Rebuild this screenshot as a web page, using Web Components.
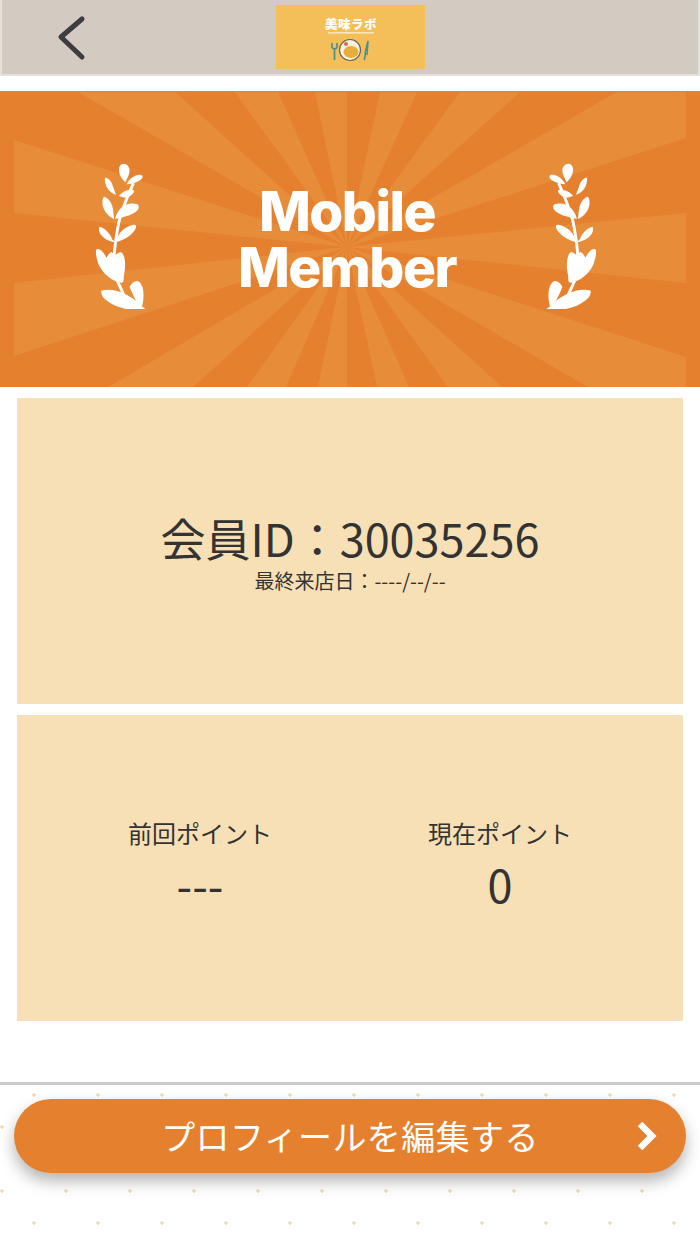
<!DOCTYPE html>
<html lang="ja"><head><meta charset="utf-8">
<style>
html,body{margin:0;padding:0;background:#fff;}
body{width:700px;height:1244px;overflow:hidden;font-family:"Noto Sans CJK JP","Noto Sans",sans-serif;color:#333;}
</style></head><body>
<app-header></app-header>
<member-banner title-a="Mobile" title-b="Member"></member-banner>
<info-card class="c1">
  <member-id id-text="会員ID：30035256" sub="最終来店日：----/--/--"></member-id>
</info-card>
<info-card class="c2">
  <point-pair>
    <point-cell label="前回ポイント" value="---"></point-cell>
    <point-cell label="現在ポイント" value="0"></point-cell>
  </point-pair>
</info-card>
<bottom-bar label="プロフィールを編集する"></bottom-bar>
<script>
const def=(name,html,init)=>customElements.define(name,class extends HTMLElement{
  connectedCallback(){ if(this.shadowRoot)return; const s=this.attachShadow({mode:'open'}); s.innerHTML=typeof html==='function'?html(this):html; }
});
def('app-header',`<style>
:host{display:flex;box-sizing:border-box;height:76px;background:#d3cbc2;border:2px solid #e4e0db;border-top:0;justify-content:center;align-items:flex-start;padding-top:5px;position:relative}
.back{position:absolute;left:52px;top:13px}
.logo{width:149px;height:64px;display:block}
</style>
<svg class="back" width="36" height="48" viewBox="0 0 36 48"><path d="M28 6 L7 24 L28 44" transform="translate(0,0)" fill="none" stroke="#3d3d3f" stroke-width="5" stroke-linecap="round" stroke-linejoin="round"/></svg>
<svg class="logo" viewBox="0 0 149 64">
<rect width="149" height="64" fill="#f4bf58"/>
<text x="75" y="24" text-anchor="middle" font-family="Noto Sans CJK JP" font-weight="900" font-size="12.5" fill="#fff" letter-spacing=".5">美味ラボ</text>
<rect x="52" y="27" width="46" height="1.6" fill="#fff" opacity=".6"/>
<circle cx="74" cy="45" r="10.5" fill="#fbf3e0" stroke="#6a6258" stroke-width="1.2"/>
<ellipse cx="75" cy="47" rx="7.5" ry="6" fill="#e9ae3a"/>
<circle cx="70" cy="39" r="2" fill="#dd6a3a"/>
<path d="M56 38v4a2.6 2.6 0 0 0 5 0v-4M58.500 44v11" fill="none" stroke="#4d8f8e" stroke-width="1.700"/>
<path d="M92 36l-3 12 2 1zM89.500 49l-1.200 6" fill="#fff" stroke="#4d8f8e" stroke-width="1.600"/>
</svg>`);
const rays=[[[14,140],[14,213]],[[14,283],[14,356]],[[78,92],[175,92]],[[235,92],[278,92]],[[315,92],[347,92]],
[[380,92],[417,92]],[[460,92],[520,92]],[[617,92],[686,92],[686,138]],[[686,213],[686,283]],[[686,357],[686,387],[588,387]],
[[377,387],[409,387]],[[448,387],[502,387]],[[108,387],[193,387]],[[247,387],[286,387]],[[318,387],[347,387]]];
const sprig=`<path d="M38 143 C33 130 26 122 27 105 C27 92 29 82 31 70 C33 58 38 45 47 25" fill="none" stroke="#fff" stroke-width="3"/>
<path d="M36.600 5C40 5 43 8 43 12C43 17 40 20 39 24C35 21 32 16 32 11C32 8 34 5 36.600 5Z" fill="#fff"/>
<path d="M40 26C43 20 50 15 55 16.500C58 18 56 21 52 23C48 25 44 26 40 26Z" fill="#fff"/>
<path d="M19 19C23 20 26 24 27 29L30 37C24 35 20 30 19 25C18.500 22 18 20 19 19Z" fill="#fff" transform="translate(-1,0)"/>
<path d="M32 38C36 33 43 31 47 32C49 34 45 38 41 39.500C38 40.500 35 39.500 32 38Z" fill="#fff"/>
<path d="M17 39C22 41 25 46 26 53L27 62C21 60 16 53 15 47C15 43 15 40 17 39Z" fill="#fff"/>
<path d="M28 62C30 53 37 46 45 46C50 46 53 47 52.500 50C52 54 46 57 40 59C36 60.500 32 61.500 28 62Z" fill="#fff"/>
<path d="M12 70C16 71 22 75 25 83L28 86C20 85 15 81 12.500 77C11 74 11 71 12 70Z" fill="#fff"/>
<path d="M29 86C30 78 37 70 47 68C51 67 50 71 48 74C44 80 37 84 29 86Z" fill="#fff"/>
<path d="M9 93C13 92 17 97 19 102C20 101 21 98 24 96C26 96 27 100 28 100C31 96 35 95 36 98C39 103 39 112 37 121C37 126 37 127 35 128C25 127 15 118 11 109C9 103 7 96 9 93Z" fill="#fff"/>
<path d="M43 132C46 127 49 126 51 126C54 127 56 130 57 135C58 142 57 148 56 152C52 153 47 142 43 132Z" fill="#fff"/>
<path d="M14 136C20 134 30 135 37 139C44 142 53 148 55 152C58 154 60 155 61 157L54 157C52 154 50 156 46 156C36 155 26 152 19 146C15 143 13 139 14 136Z" fill="#fff"/>`;
def('member-banner',h=>`<style>
:host{display:block;position:relative;margin-top:15px;height:296px;background:#e5812e;overflow:hidden}
svg.r{position:absolute;left:0;top:0}
.s{position:absolute;top:68px;width:60px;height:150px}
.l{left:87px}.rr{right:95px;transform:scaleX(-1)}
.t{position:absolute;left:0;width:694px;top:92px;text-align:center;font:800 55px/56px Inter,"Liberation Sans",sans-serif;color:#fff;letter-spacing:-1.500px}
</style>
<svg class="r" width="700" height="296" viewBox="0 91 700 296">${rays.map(r=>`<polygon fill="#e78d39" points="347,247 ${r.map(p=>p.join(',')).join(' ')}"/>`).join('')}</svg>
<svg class="s l" viewBox="0 0 60 155">${sprig}</svg>
<svg class="s rr" viewBox="0 0 60 155">${sprig}</svg>
<div class="t">${h.getAttribute('title-a')}<br>${h.getAttribute('title-b')}</div>`);
def('info-card',`<style>
:host{display:flex;box-sizing:border-box;height:306px;margin:11px 17px 0;background:#f7e0b5;align-items:center;justify-content:center}
</style><slot></slot>`);
def('member-id',h=>`<style>
:host{display:block;text-align:center;color:#333;margin-top:-4px}
.a{font-size:45px;line-height:66px;white-space:nowrap}
.b{font-size:20px;line-height:24px;margin-top:-2px}
</style><div class="a">${h.getAttribute('id-text')}</div><div class="b">${h.getAttribute('sub')}</div>`);
def('point-pair',`<style>
:host{display:grid;grid-template-columns:1fr 1fr;width:100%;box-sizing:border-box;padding:0 33px;margin-top:-4px}
</style><slot></slot>`);
def('point-cell',h=>`<style>
:host{display:block;text-align:center}
.a{font-size:24px;line-height:36px}
.b{font-size:45px;line-height:66px;margin-top:0}
</style><div class="a">${h.getAttribute('label')}</div><div class="b">${h.getAttribute('value')}</div>`);
def('bottom-bar',h=>`<style>
:host{display:block;position:absolute;left:0;right:0;top:1082px;height:162px;border-top:3px solid #cacaca;box-sizing:border-box;
background-color:#fff;background-image:radial-gradient(circle,#fbd9ab 1.5px,transparent 1.8px),radial-gradient(circle,#fbd9ab 1.5px,transparent 1.8px);background-size:64px 64px;background-position:2px 42px,34px 10px;padding-top:14px}
.btn{box-sizing:border-box;height:74px;margin:0 14px;border-radius:37px;background:#e5812e;color:#fff;font-size:34px;line-height:74px;text-align:center;position:relative;box-shadow:0 8px 16px rgba(0,0,0,.3);letter-spacing:.4px;}
svg{position:absolute;right:26px;top:20px}
</style>
<div class="btn">${h.getAttribute('label')}<svg width="26" height="34" viewBox="0 0 26 34"><path d="M6 5L18 17L6 29" fill="none" stroke="#fff" stroke-width="6.500"/></svg></div>`);
</script>
</body></html>
